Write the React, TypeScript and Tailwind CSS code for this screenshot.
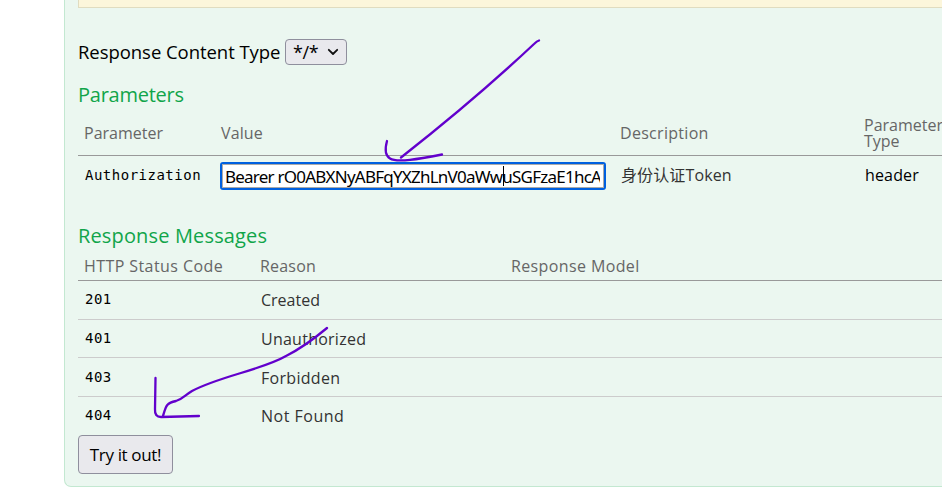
const statusRows = [
  { code: "201", reason: "Created", row: "h-[39px]", tracking: "" },
  { code: "401", reason: "Unauthorized", row: "h-[38px]", tracking: "tracking-[0.25px]" },
  { code: "403", reason: "Forbidden", row: "h-[39px] pt-px", tracking: "tracking-[0.3px]" },
];

const mono = "font-['DejaVu_Sans_Mono',monospace] text-[14px] tracking-[0.5px] text-black";

function StatusRow({ code, reason, tracking }: { code: string; reason: string; tracking: string }) {
  return (
    <>
      <span className={`${mono} w-[183px] shrink-0 pl-[7px] leading-[36px]`}>{code}</span>
      <span className={`leading-[38px] text-[#333] ${tracking}`}>{reason}</span>
    </>
  );
}

export default function App() {
  return (
    <div className="relative h-[495px] w-[942px] overflow-hidden bg-white font-['Open_Sans','Noto_Sans_CJK_SC',sans-serif] text-[16px] whitespace-nowrap">
      <main className="ml-[64px] h-[487px] w-[900px] rounded-bl-[7px] border-b border-l border-[#c3e8d1] bg-[#ebf7f0] pl-[13px]">
        <div className="h-[8px] border-b border-l border-[#e0dcc0] bg-[#fcf6db]" />

        <div className="flex items-center pt-[31px] text-black">
          <label className="w-[207px] text-[18.5px] leading-[26px] tracking-[-0.05px]">Response Content Type</label>
          <button className="flex h-[26px] w-[62px] items-center justify-between rounded-[4px] border border-[#8f8f9d] bg-[#e9e9ed] pr-[7px] pl-[7px] text-[18px] tracking-[-0.4px]">
            <span>*/*</span>
            <svg width="12" height="8" viewBox="0 0 12 8" fill="none">
              <path d="M1.800 1.800 6 6l4.200-4.200" stroke="#111" strokeWidth="1.800" strokeLinecap="round" strokeLinejoin="round" />
            </svg>
          </button>
        </div>

        <h4 className="mt-[15px] h-[30px] text-[20px] leading-[30px] tracking-[-0.25px] text-[#10a54a]">Parameters</h4>

        <div className="flex h-[46px] items-center border-b border-[#999] text-[#666]">
          <span className="w-[142px] pl-[6px]">Parameter</span>
          <span className="w-[400px] pl-px tracking-[0.1px]">Value</span>
          <span className="w-[244px] tracking-[0.3px]">Description</span>
          <span className="leading-[16px]">Parameter<br />Type</span>
        </div>
        <div className="flex h-[62px] items-start pt-[6px]">
          <span className={`${mono} w-[142px] pl-[7px] leading-[26px]`}>Authorization</span>
          <div className="flex h-[28px] w-[386px] items-center rounded-[3px] border-2 border-[#0060df] bg-white">
            <div className="relative flex h-full w-full items-center border border-[#aaa] pt-px pl-[2px]">
              <span className="w-[375px] overflow-hidden font-['Noto_Sans',sans-serif] text-[17px] leading-[22px] tracking-[-0.77px] text-black">
                Bearer rO0ABXNyABFqYXZhLnV0aWwuSGFzaE1hcA
              </span>
              <i className="absolute top-[1px] left-[280px] h-[20px] w-px bg-black" />
            </div>
          </div>
          <span className="ml-[14px] w-[244px] pl-[1px] leading-[26px] tracking-[0.12px] text-[#333]">身份认证Token</span>
          <span className="pl-px leading-[26px] tracking-[0.15px] text-black">header</span>
        </div>

        <h4 className="h-[36px] text-[20px] leading-[36px] tracking-[0.15px] text-[#10a54a]">Response Messages</h4>
        <div className="flex h-[27px] items-center border-b border-[#999] pb-[2px] text-[#666]">
          <span className="w-[182px] pl-[6px] tracking-[0.42px]">HTTP Status Code</span>
          <span className="w-[251px] tracking-[0.2px]">Reason</span>
          <span className="tracking-[0.38px]">Response Model</span>
        </div>
        {statusRows.map(({ code, reason, row, tracking }) => (
          <div key={code} className={`flex border-b border-[#ccc] ${row}`}>
            <StatusRow code={code} reason={reason} tracking={tracking} />
          </div>
        ))}
        <div className="flex h-[38px]">
          <StatusRow code="404" reason="Not Found" tracking="tracking-[0.5px]" />
        </div>
        <button className="h-[39px] w-[95px] rounded-[4px] border border-[#8f8f9d] bg-[#e9e9ed] text-[17px] tracking-[-0.35px] text-black">
          Try it out!
        </button>
      </main>

      <svg className="pointer-events-none absolute inset-0" width="942" height="495" fill="none" stroke="#6200cc" strokeWidth="2.300" strokeLinecap="round" strokeLinejoin="round">
        <path d="M539 40.500Q537 41 534 44C500 76 464 108 401 157.500" />
        <path d="M387 141C384.500 150 386 156 390 158.500C397 163 419 159 442 154.500" />
        <path d="M327 328C315 338 300 349 286 356C262 370 220 376 192 391C185 395 183 399 176 401C166 403 166 406 163 416" />
        <path d="M155.500 378 155 409Q154.500 417 161 417L199 416" />
      </svg>
    </div>
  );
}
